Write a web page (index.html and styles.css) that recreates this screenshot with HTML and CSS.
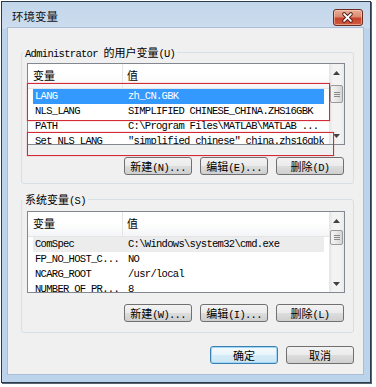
FILE: index.html
```html
<!DOCTYPE html>
<html lang="zh-CN">
<head>
<meta charset="utf-8">
<title>环境变量</title>
<link rel="stylesheet" href="styles.css">
</head>
<body>
<div class="window">
  <div class="titlebar">
    <span class="title">环境变量</span>
    <button class="close" aria-label="关闭">
      <svg width="30" height="17" viewBox="0 0 30 17">
        <path d="M11.5 5 L18.5 12 M18.5 5 L11.5 12" stroke="#5b2119" stroke-width="4" stroke-linecap="round"/>
        <path d="M11.5 5 L18.5 12 M18.5 5 L11.5 12" stroke="#ffffff" stroke-width="2" stroke-linecap="round"/>
      </svg>
    </button>
  </div>
  <div class="client">
    <div class="group g1">
      <div class="legend"><span class="lat">Administrator </span>的用户变量<span class="lat">(U)</span></div>
      <div class="list l1">
        <div class="list-body">
          <div class="lv-header"><div class="c1">变量</div><div class="c2">值</div></div>
          <div class="row sel"><div class="c1 lat">LANG</div><div class="c2 lat">zh_CN.GBK</div></div>
          <div class="row"><div class="c1 lat">NLS_LANG</div><div class="c2 lat">SIMPLIFIED CHINESE_CHINA.ZHS16GBK</div></div>
          <div class="row"><div class="c1 lat">PATH</div><div class="c2 lat">C:\Program Files\MATLAB\MATLAB ...</div></div>
          <div class="row"><div class="c1 lat">Set NLS_LANG</div><div class="c2 lat">"simplified chinese"_china.zhs16gbk</div></div>
        </div>
        <div class="scrollbar">
          <div class="sb-btn"><svg width="7" height="4" viewBox="0 0 7 4"><path d="M0 4 L3.5 0 L7 4 Z" fill="#404040"/></svg></div>
          <div class="sb-track"><div class="thumb"><span></span><span></span><span></span></div></div>
          <div class="sb-btn"><svg width="7" height="4" viewBox="0 0 7 4"><path d="M0 0 L3.5 4 L7 0 Z" fill="#404040"/></svg></div>
        </div>
        <div class="mark m1"></div>
        <div class="mark m2"></div>
      </div>
      <div class="btns">
        <button class="btn">新建<span class="lat">(N)...</span></button>
        <button class="btn">编辑<span class="lat">(E)...</span></button>
        <button class="btn">删除<span class="lat">(D)</span></button>
      </div>
    </div>
    <div class="group g2">
      <div class="legend">系统变量<span class="lat">(S)</span></div>
      <div class="list l2">
        <div class="list-body">
          <div class="lv-header"><div class="c1">变量</div><div class="c2">值</div></div>
          <div class="row hot"><div class="c1 lat">ComSpec</div><div class="c2 lat">C:\Windows\system32\cmd.exe</div></div>
          <div class="row"><div class="c1 lat">FP_NO_HOST_C...</div><div class="c2 lat">NO</div></div>
          <div class="row"><div class="c1 lat">NCARG_ROOT</div><div class="c2 lat">/usr/local</div></div>
          <div class="row"><div class="c1 lat">NUMBER_OF_PR...</div><div class="c2 lat">8</div></div>
        </div>
        <div class="scrollbar">
          <div class="sb-btn"><svg width="7" height="4" viewBox="0 0 7 4"><path d="M0 4 L3.5 0 L7 4 Z" fill="#404040"/></svg></div>
          <div class="sb-track"><div class="thumb"><span></span><span></span><span></span></div></div>
          <div class="sb-btn"><svg width="7" height="4" viewBox="0 0 7 4"><path d="M0 0 L3.5 4 L7 0 Z" fill="#404040"/></svg></div>
        </div>
      </div>
      <div class="btns">
        <button class="btn">新建<span class="lat">(W)...</span></button>
        <button class="btn">编辑<span class="lat">(I)...</span></button>
        <button class="btn">删除<span class="lat">(L)</span></button>
      </div>
    </div>
    <div class="dlg-btns">
      <button class="btn default">确定</button>
      <button class="btn">取消</button>
    </div>
  </div>
</div>
</body>
</html>
```

FILE: styles.css
```css
* { box-sizing: border-box; }
html, body { margin: 0; padding: 0; }
body {
  background: #ffffff;
  width: 376px;
  height: 387px;
  overflow: hidden;
  font-family: "Noto Sans CJK SC", sans-serif;
  font-size: 11px;
  color: #000;
}
.lat {
  font-family: "Liberation Mono", monospace;
  font-size: 10.5px;
  letter-spacing: -0.7px;
}
.window {
  margin: 1px 0 0 1px;
  width: 370px;
  height: 382px;
  border: 1px solid #2b3b4d;
  background: linear-gradient(to bottom, #c3d6ea 0, #cddcee 26px, #bcd3ec 27px, #bcd3ec 100%);
  padding: 0 7px 8px 6px;
  box-shadow: 1px 1px 0 #5a6470;
  display: flex;
  flex-direction: column;
}
.titlebar {
  height: 26px;
  display: flex;
  align-items: flex-start;
}
.title {
  margin: 7px 0 0 4px;
  line-height: 14px;
  height: 14px;
  font-size: 11.5px;
  color: #111;
}
.close {
  margin: 7px 0 0 auto;
  width: 30px;
  height: 17px;
  padding: 0;
  border: 1px solid #6b2c22;
  border-radius: 3px;
  background: linear-gradient(to bottom, #e9ae9a 0%, #dc8a72 45%, #c8432c 55%, #cf5a3e 100%);
  box-shadow: inset 0 0 0 1px rgba(255, 220, 200, 0.5);
  display: flex;
}
.close svg { display: block; margin: -1px 0 0 -1px; }
.client {
  height: 346px;
  background: #f0f0f0;
  padding: 0 9px 0 13px;
  display: flex;
  flex-direction: column;
  box-shadow: 0 0 0 1px #a9bed6;
}
.group {
  border: 1px solid #d5dfe5;
  border-radius: 3px;
  display: flex;
  flex-direction: column;
}
.g1 { margin-top: 24px; }
.g2 { margin-top: 15px; }
.legend {
  align-self: flex-start;
  height: 14px;
  line-height: 14px;
  margin: -8px 0 0 1px;
  padding: 0 2px;
  background: #f0f0f0;
  white-space: nowrap;
}
.list {
  position: relative;
  margin: 4px 0 0 5px;
  width: 318px;
  height: 82px;
  border: 1px solid #828790;
  background: #fff;
  display: flex;
}
.l2 { margin-top: 5px; height: 82px; }
.list-body {
  flex: 1;
  overflow: hidden;
  white-space: nowrap;
}
.lv-header {
  height: 25px;
  display: flex;
  background: linear-gradient(to bottom, #ffffff 0%, #ffffff 45%, #f4f5f7 100%);
  border-bottom: 1px solid #e5e5e5;
  line-height: 23px;
}
.lv-header .c1 {
  width: 95px;
  padding-left: 5px;
  border-right: 1px solid #e5e5e5;
}
.lv-header .c2 { padding-left: 4px; }
.row {
  height: 15px;
  line-height: 15px;
  margin-left: 5px;
  width: 291px;
  display: flex;
}
.row .c1 { width: 90px; padding-left: 2px; overflow: hidden; }
.row .c2 { flex: 1; padding-left: 5px; overflow: hidden; }
.row.sel { background: #3399ff; color: #fff; }
.row.hot { background: #ececec; }
.scrollbar {
  width: 15px;
  display: flex;
  flex-direction: column;
  background: linear-gradient(to right, #e4e4e4 0%, #f3f3f3 25%, #f3f3f3 75%, #e9e9e9 100%);
}
.sb-btn {
  height: 17px;
  display: flex;
  align-items: center;
  justify-content: center;
}
.sb-track { flex: 1; padding: 0 1px; }
.thumb {
  border: 1px solid #9a9a9a;
  border-radius: 2px;
  background: linear-gradient(to right, #f4f4f4 0%, #e8e8e8 50%, #d6d6d6 100%);
  display: flex;
  flex-direction: column;
  align-items: center;
  justify-content: center;
  gap: 1px;
}
.thumb span {
  display: block;
  width: 6px;
  height: 1px;
  background: #8a8a8a;
}
.l1 .thumb { margin-top: 4px; height: 18px; }
.l2 .thumb { margin-top: 1px; height: 15px; }
.mark {
  position: absolute;
  left: -1px;
  border: 1px solid #d22a36;
  box-shadow: 0 0 1px #e77;
}
.m1 { top: 19px; width: 303px; height: 38px; }
.m2 { top: 68px; width: 307px; height: 24px; }
.btns {
  display: flex;
  justify-content: flex-end;
  gap: 8px;
  margin: 12px 9px 8px 0;
}
.g2 .btns { margin: 11px 9px 10px 0; }
.btn {
  width: 68px;
  height: 18px;
  padding: 0;
  border: 1px solid #707070;
  border-radius: 3px;
  background: linear-gradient(to bottom, #f2f2f2 0%, #ebebeb 50%, #dddddd 51%, #cfcfcf 100%);
  font-family: "Noto Sans CJK SC", sans-serif;
  font-size: 11px;
  line-height: 16px;
  color: #000;
  white-space: nowrap;
}
.btn.default {
  border-color: #3c7fb1;
  background: linear-gradient(to bottom, #f4fafd 0%, #e7f4fb 50%, #d6ecf8 51%, #cbe6f5 100%);
  box-shadow: inset 0 0 0 1px #9fd6f4;
}
.dlg-btns {
  display: flex;
  justify-content: flex-end;
  gap: 8px;
  margin-top: 13px;
}
```
